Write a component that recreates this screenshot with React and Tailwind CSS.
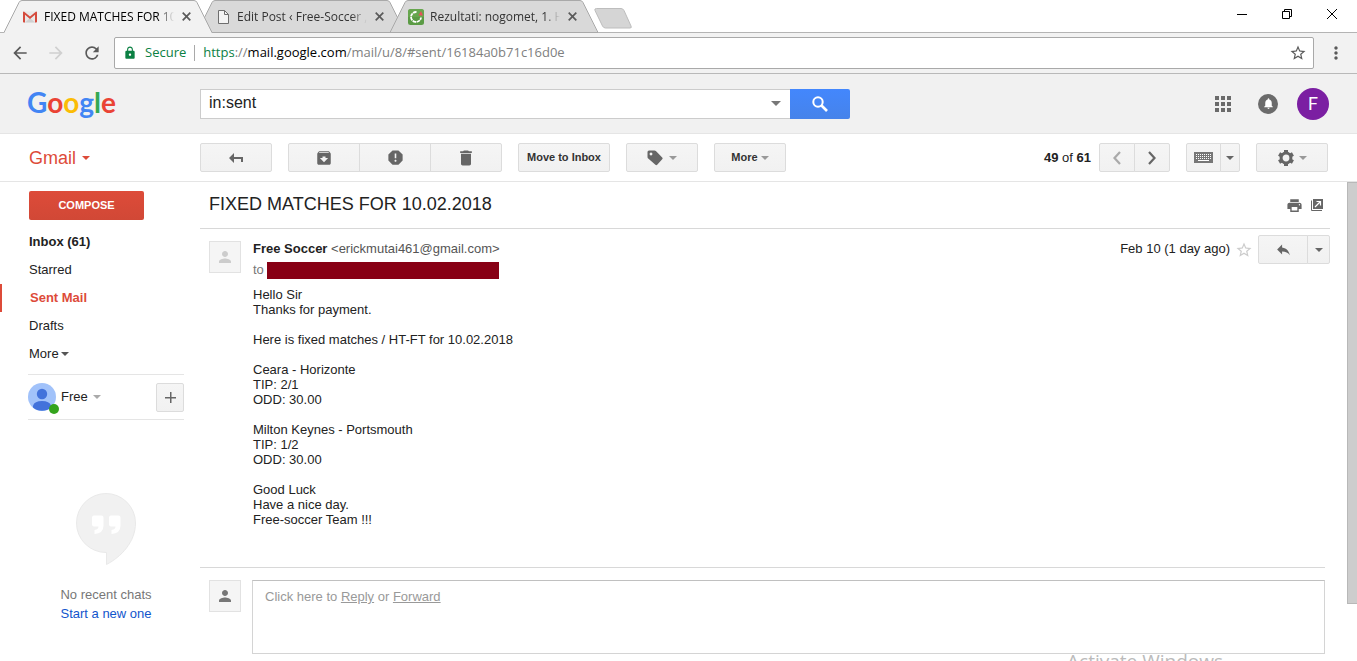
import clsx from 'clsx';
import {
  MdArchive,
  MdArrowBack,
  MdArrowForward,
  MdDelete,
  MdLock,
  MdMoreVert,
  MdNotifications,
  MdPerson,
  MdPrint,
  MdRefresh,
  MdReply,
  MdReport,
  MdSearch,
  MdStarBorder,
} from 'react-icons/md';

const folders = [
  { name: 'Inbox (61)', bold: true },
  { name: 'Starred' },
  { name: 'Sent Mail', active: true },
  { name: 'Drafts' },
];

const message = `Hello Sir
Thanks for payment.

Here is fixed matches / HT-FT for 10.02.2018

Ceara - Horizonte
TIP: 2/1
ODD: 30.00

Milton Keynes - Portsmouth
TIP: 1/2
ODD: 30.00

Good Luck
Have a nice day.
Free-soccer Team !!!`;

function Caret({ className = 'text-[#999]' }) {
  return (
    <svg viewBox="0 0 8 4" className={clsx('w-2 h-1 shrink-0', className)} fill="currentColor">
      <path d="M0 0h8L4 4z" />
    </svg>
  );
}

function Gear() {
  return (
    <svg viewBox="0 0 16 16" className="w-4 h-4 shrink-0" fill="none" stroke="currentColor">
      <circle cx="8" cy="8" r="4.900" strokeWidth="3" />
      {[0, 60, 120].map((angle) => (
        <path key={angle} d="M8 0v3M8 13v3" strokeWidth="4" transform={`rotate(${angle} 8 8)`} />
      ))}
    </svg>
  );
}

function GmailFavicon() {
  return (
    <svg viewBox="0 0 14 12" className="w-[14px] h-3">
      <path d="M1 0.5h12v11H1z" fill="#e9e9e9" />
      <path d="M2 11.5 7 7l5 4.5z" fill="#d0d0d0" />
      <path d="M0 1.2Q0 .5.9.5L7 5.6 13.1.5q.9 0 .9.7v9.6q0 .7-.8.7H12V3.8L7 7.9 2 3.8v7.7H.8q-.8 0-.8-.7z" fill="#d54b3d" />
    </svg>
  );
}

function PageFavicon() {
  return (
    <svg viewBox="0 0 11 14" className="w-[11px] h-[14px]" fill="#f4f4f4" stroke="#6e6e6e">
      <path d="M.5.5h6l4 4v9H.5z" />
      <path d="M6.500.5v4h4" fill="none" />
    </svg>
  );
}

function ScoreFavicon() {
  return (
    <svg viewBox="0 0 16 16" className="w-4 h-4">
      <rect width="16" height="16" rx="2.500" fill="#5b9b45" />
      <path d="M0 2.500A2.500 2.500 0 0 1 2.500 0h11A2.500 2.500 0 0 1 16 2.500V8H0z" fill="#6fae55" opacity=".6" />
      <path d="M8.500 3A5 5 0 1 0 13 8.500" fill="none" stroke="#fff" strokeWidth="1.800" strokeDasharray="3.500 .6" />
      <path d="M10.500 6.500 13 2l2 4.500z" fill="#e8505b" />
    </svg>
  );
}

function Tab({ title, icon, active, className }) {
  return (
    <div className={clsx('relative w-52 h-[33px] flex items-center pl-[18px] pr-5', active ? 'z-10' : 'z-0', className)}>
      <svg viewBox="0 0 208 33" className="absolute inset-0 w-52 h-[33px]">
        <path d="M0 33 15 2.500Q16 .5 18 .5H190q2 0 3 2L208 33z" fill={active ? '#f2f2f2' : '#d9d9d9'} />
        <path
          d={active ? 'M0 32.500 15 2.500Q16 .5 18 .5H190q2 0 3 2L208 32.500' : 'M0 32.500 15 2.500Q16 .5 18 .5H190q2 0 3 2L208 32.500z'}
          fill="none"
          stroke="#a9a9a9"
        />
      </svg>
      <span className="relative w-4 flex justify-center shrink-0">{icon}</span>
      <span
        className={clsx(
          'relative ml-[6px] w-[130px] overflow-hidden whitespace-nowrap text-xs [mask-image:linear-gradient(to_right,black_88%,transparent)]',
          active ? 'text-black' : 'text-[#333]'
        )}
      >
        {title}
      </span>
      <button aria-label="Close tab" className="relative ml-2 shrink-0">
        <svg viewBox="0 0 9 9" className="w-[9px] h-[9px]" stroke="#5a5a5a" strokeWidth="1.700">
          <path d="M.7.7l7.600 7.600M8.300.7.7 8.300" />
        </svg>
      </button>
    </div>
  );
}

function BrowserChrome() {
  return (
    <div className="font-['Open_Sans',sans-serif]">
      <div className="flex justify-between bg-white border-b border-[#b4b4b4] h-[33px]">
        <div className="flex pl-1">
          <Tab active title="FIXED MATCHES FOR 10." icon={<GmailFavicon />} />
          <Tab className="-ml-[15px]" title="Edit Post ‹ Free-Soccer , F" icon={<PageFavicon />} />
          <Tab className="-ml-[15px]" title="Rezultati: nogomet, 1. HN" icon={<ScoreFavicon />} />
          <button aria-label="New tab" className="-ml-1 mt-2 self-start">
            <svg viewBox="0 0 38 21" className="w-[38px] h-[21px]" fill="#d5d5d5" stroke="#bdbdbd">
              <path d="M2.500.5H27q2 0 3 2l7 15.500q1 2-1 2H11.500q-2 0-3-2L1 2.500q-.8-2 1.500-2z" />
            </svg>
          </button>
        </div>
        <div className="flex items-center gap-[35px] pr-5 pb-1">
          <button aria-label="Minimize">
            <svg viewBox="0 0 10 10" className="w-[10px] h-[10px]" stroke="#000"><path d="M0 5.500h10" /></svg>
          </button>
          <button aria-label="Restore">
            <svg viewBox="0 0 10 10" className="w-[10px] h-[10px]" stroke="#000" fill="none">
              <path d="M.5 2.500h7v7h-7zM2.500 2.500v-2h7v7h-2" />
            </svg>
          </button>
          <button aria-label="Close">
            <svg viewBox="0 0 10 10" className="w-[10px] h-[10px]" stroke="#000"><path d="M0 0l10 10M10 0 0 10" /></svg>
          </button>
        </div>
      </div>
      <div className="flex items-center h-[41px] bg-[#f2f2f2] border-b border-[#b9b9b9] pl-[10px] pr-[11px] text-[#5a5a5a]">
        <button aria-label="Back"><MdArrowBack size={20} /></button>
        <button aria-label="Forward" className="ml-4 text-[#d0d0d0]"><MdArrowForward size={20} /></button>
        <button aria-label="Reload" className="ml-4"><MdRefresh size={20} /></button>
        <div className="ml-3 mr-3 flex flex-1 items-center h-8 bg-white border border-[#a9a9a9] rounded-xs pl-2 pr-[6px] text-[13px]">
          <MdLock size={14} className="text-[#0b8043]" />
          <span className="ml-2 text-[#0b8043]">Secure</span>
          <span className="mx-2 w-px h-4 bg-[#a9a9a9]" />
          <div role="textbox" aria-label="Address" className="flex-1 text-[#808080]">
            <span className="text-[#0b8043]">https</span>://<span className="text-black">mail.google.com</span>
            /mail/u/8/#sent/16184a0b71c16d0e
          </div>
          <button aria-label="Bookmark this page"><MdStarBorder size={18} /></button>
        </div>
        <button aria-label="Browser menu"><MdMoreVert size={20} /></button>
      </div>
    </div>
  );
}

function Header() {
  return (
    <header className="flex items-center h-[60px] bg-[#f1f1f1] border-b border-[#e5e5e5] pr-7">
      <a href="#home" className="w-[200px] shrink-0 pl-[27px] pb-1 font-['Lato',sans-serif] font-bold text-[28px] leading-none">
        <span className="text-[#4285f4]">G</span>
        <span className="text-[#ea4335]">o</span>
        <span className="text-[#fbbc05]">o</span>
        <span className="text-[#4285f4]">g</span>
        <span className="text-[#34a853]">l</span>
        <span className="text-[#ea4335]">e</span>
      </a>
      <form className="flex w-[650px] h-[30px]" onSubmit={(e) => e.preventDefault()}>
        <div className="flex flex-1 items-center bg-white border border-r-0 border-[#ccc] pr-[9px]">
          <input aria-label="Search mail" defaultValue="in:sent" className="flex-1 min-w-0 pl-2 pb-0.5 text-base leading-6 text-[#222] outline-none" />
          <button type="button" aria-label="Search options">
            <svg viewBox="0 0 10 5" className="w-[10px] h-[5px]" fill="#777"><path d="M0 0h10L5 5z" /></svg>
          </button>
        </div>
        <button aria-label="Search" className="w-[60px] flex items-center justify-center rounded-r-xs bg-linear-to-b from-[#4387fd] to-[#4683ea] text-white">
          <svg viewBox="0 0 16 16" className="w-4 h-4" fill="none" stroke="currentColor">
            <circle cx="6" cy="6" r="4.700" strokeWidth="2" />
            <path d="M9.500 9.500l5.500 5.500" strokeWidth="2.600" />
          </svg>
        </button>
      </form>
      <div className="ml-auto flex items-center">
        <button aria-label="Google apps">
          <svg viewBox="0 0 16 16" className="w-4 h-4" fill="#6b6b6b">
            {[0, 6, 12].map((y) => [0, 6, 12].map((x) => <rect key={`${x}-${y}`} x={x} y={y} width="4" height="4" />))}
          </svg>
        </button>
        <button aria-label="Notifications" className="ml-[27px] w-5 h-5 rounded-full bg-[#6b6b6b] text-white flex items-center justify-center">
          <MdNotifications size={13} />
        </button>
        <button aria-label="Account" className="ml-[19px] w-8 h-8 rounded-full bg-[#7b1fa2] text-white text-lg leading-none font-['Roboto',sans-serif]">F</button>
      </div>
    </header>
  );
}

const btn = 'h-[29px] flex items-center justify-center border border-[#dcdcdc] bg-linear-to-b from-[#f5f5f5] to-[#f1f1f1] text-[11px] font-bold';

function Btn({ label, color = 'text-[#666]', className, children }) {
  return (
    <button aria-label={label} className={clsx(btn, color, className)}>
      {children}
    </button>
  );
}

function Toolbar() {
  return (
    <div className="flex items-center h-12 border-b border-[#e5e5e5] pr-[29px]">
      <button className="w-[200px] shrink-0 pl-[29px] flex items-center gap-[6px] text-lg leading-6 text-[#dd4b39]">
        Gmail <Caret className="text-[#dd4b39]" />
      </button>
      <div className="flex gap-4">
        <Btn label="Back to Sent Mail" className="w-[72px] rounded-xs">
          <svg viewBox="0 0 14 10" className="w-[14px] h-[10px]" fill="currentColor">
            <path d="M0 5 5 0v4h9v5h-2V6H5v4z" />
          </svg>
        </Btn>
        <div className="flex">
          <Btn label="Archive" className="w-[72px] rounded-l-xs"><MdArchive size={18} /></Btn>
          <Btn label="Report spam" className="w-[72px] -ml-px"><MdReport size={19} /></Btn>
          <Btn label="Delete" className="w-[72px] -ml-px rounded-r-xs"><MdDelete size={20} /></Btn>
        </div>
        <Btn color="text-[#333]" className="w-[92px] rounded-xs whitespace-nowrap">Move to Inbox</Btn>
        <Btn label="Labels" className="w-[72px] rounded-xs gap-[6px]">
          <svg viewBox="0 0 16 16" className="w-4 h-4" fill="currentColor" fillRule="evenodd">
            <path d="M2 0.500h5.500q.8 0 1.400.6l6.300 6.300q.9.9 0 1.800l-5 5.600q-.9.900-1.800 0L1.200 8.500Q.5 8 .5 7V2Q.5.500 2 .5zM4 2.600a1.400 1.400 0 1 0 .01 0z" />
          </svg>
          <Caret />
        </Btn>
        <Btn color="text-[#333]" className="w-[72px] rounded-xs gap-[3px]">More <Caret /></Btn>
      </div>
      <div className="ml-auto flex items-center">
        <span className="mr-2 text-[13px] font-bold text-[#222]">49 <span className="font-normal">of</span> 61</span>
        <Btn label="Newer" color="text-[#aaa]" className="w-9 rounded-l-xs">
          <svg viewBox="0 0 8 14" className="w-2 h-[14px]" fill="none" stroke="currentColor" strokeWidth="2.200"><path d="M7 1 1.500 7 7 13" /></svg>
        </Btn>
        <Btn label="Older" className="w-9 -ml-px rounded-r-xs">
          <svg viewBox="0 0 8 14" className="w-2 h-[14px]" fill="none" stroke="currentColor" strokeWidth="2.200"><path d="M1 1l5.500 6L1 13" /></svg>
        </Btn>
        <Btn label="Input tools" className="ml-4 w-[35px] rounded-l-xs">
          <svg viewBox="0 0 19 11" className="w-[19px] h-[11px]">
            <path d="M0 0h19v11H0z" fill="#777" />
            <path d="M2 2.500h15M2 4.500h15M2 6.500h15" stroke="#fff" strokeDasharray="1 1" />
            <path d="M4 8.500h11" stroke="#fff" />
          </svg>
        </Btn>
        <Btn label="Select input tool" className="w-5 -ml-px rounded-r-xs"><Caret className="text-[#666]" /></Btn>
        <Btn label="Settings" className="ml-4 w-[72px] rounded-xs gap-[5px]"><Gear /><Caret /></Btn>
      </div>
    </div>
  );
}

function Sidebar() {
  return (
    <aside className="w-[200px] shrink-0 pt-[9px] text-[13px] text-[#222]">
      <button className="ml-[29px] w-[115px] h-[29px] rounded-xs bg-linear-to-b from-[#dd4b39] to-[#d14836] text-white text-[11px] font-bold">
        COMPOSE
      </button>
      <nav className="pt-2">
        {folders.map(({ name, bold, active }) => (
          <a
            key={name}
            href="#folder"
            className={clsx(
              'flex items-center h-7',
              active ? 'border-l-2 border-[#dd4b39] pl-7 text-[#dd4b39] font-bold' : 'pl-[29px]',
              bold && 'font-bold'
            )}
          >
            {name}
          </a>
        ))}
        <button className="flex items-center gap-[2px] h-7 pl-[29px]">
          More <Caret className="text-[#555]" />
        </button>
      </nav>
      <div className="mt-[6px] ml-7 mr-4 h-[46px] border-y border-[#e5e5e5] flex items-center">
        <span className="relative">
          <svg viewBox="0 0 28 28" className="w-7 h-7">
            <circle cx="14" cy="14" r="14" fill="#a1c2fa" />
            <circle cx="14" cy="11" r="5.200" fill="#4272db" />
            <path d="M5 24.500v-2Q6.500 18 14 18t9 4.500v2A14 14 0 0 1 5 24.500z" fill="#4272db" />
          </svg>
          <span className="absolute -right-[3px] -bottom-[3px] w-[10px] h-[10px] rounded-full bg-[#34a41d]" />
        </span>
        <button className="ml-[5px] flex items-center gap-[5px]">Free <Caret className="text-[#aaa]" /></button>
        <Btn label="New conversation" className="ml-auto w-7 rounded-xs">
          <svg viewBox="0 0 11 11" className="w-[11px] h-[11px]" fill="currentColor"><path d="M5 0h1.500v5H11v1.500H6.500V11H5V6.500H0V5h5z" /></svg>
        </Btn>
      </div>
      <div className="mt-[73px] pl-3 flex flex-col items-center leading-[19px]">
        <svg viewBox="0 0 60 72" className="w-[60px] h-[72px] mb-5">
          <path d="M30 .5a29.500 29.500 0 0 0 0 59h.5V71.500C45 64 59.500 49 59.500 30A29.500 29.500 0 0 0 30 .5z" fill="#f1f1f1" stroke="#e9e9e9" />
          <path d="M18 22.500h7.500q2 0 2 2v8q0 8-9 8.500V37q4-.5 4-3.500H18q-2 0-2-2v-7q0-2 2-2zM35 22.500h7.500q2 0 2 2v8q0 8-9 8.500V37q4-.5 4-3.500H35q-2 0-2-2v-7q0-2 2-2z" fill="#fff" />
        </svg>
        <span className="text-[#777]">No recent chats</span>
        <a href="#chat" className="text-[#15c]">Start a new one</a>
      </div>
    </aside>
  );
}

function Avatar({ className }) {
  return (
    <span className={clsx('w-8 h-8 shrink-0 flex items-center justify-center bg-[#f5f5f5] border border-[#e2e2e2]', className)}>
      <MdPerson size={18} />
    </span>
  );
}

function Conversation() {
  return (
    <main className="flex-1 min-w-0 pr-[17px] text-[13px] text-[#222]">
      <div className="flex items-center h-[47px] pl-[9px] pr-[7px] border-b border-[#d8d8d8] text-[#666]">
        <h1 className="flex-1 pb-0.5 text-lg leading-6 text-[#222]">FIXED MATCHES FOR 10.02.2018</h1>
        <button aria-label="Print all"><MdPrint size={17} /></button>
        <button aria-label="Open in new window" className="ml-2">
          <svg viewBox="0 0 12 12" className="w-3 h-3">
            <path d="M2 0h10v10H2z" fill="#666" />
            <path d="M.5 1.500v10H11" fill="none" stroke="#666" />
            <path d="M4 8l5-5M5.500 2.500h4v4" fill="none" stroke="#fff" strokeWidth="1.200" />
          </svg>
        </button>
      </div>

      <article className="flex pl-[9px] pt-[6px]">
        <Avatar className="mt-[6px] text-[#ccc]" />
        <div className="flex-1 ml-3">
          <div className="flex items-center h-[29px]">
            <p className="flex-1 pb-0.5 text-[#555]">
              <span className="font-bold text-[#222]">Free Soccer</span> &lt;erickmutai461@gmail.com&gt;
            </p>
            <span className="pb-0.5">Feb 10 (1 day ago)</span>
            <button aria-label="Star" className="mx-[5px] text-[#ccc]"><MdStarBorder size={18} /></button>
            <Btn label="Reply" className="w-[50px] rounded-l-xs"><MdReply size={17} /></Btn>
            <Btn label="More reply options" className="w-[23px] -ml-px rounded-r-xs"><Caret className="text-[#666]" /></Btn>
          </div>
          <p className="flex items-center h-3 text-[#777]">
            to <span className="ml-[3px] w-[232px] h-[17px] bg-[#880015]" />
          </p>
          <p className="mt-[11px] whitespace-pre-line leading-[15px]">{message}</p>
        </div>
      </article>

      <section className="mt-10 mr-[5px] border-t border-[#d8d8d8] pl-[9px] pt-3 flex">
        <Avatar className="text-[#777]" />
        <div className="ml-[11px] flex-1 h-[74px] border border-[#d4d4d4] border-t-[#c0c0c0] px-3 pt-2 leading-4 text-[#999]">
          Click here to <a href="#reply" className="underline">Reply</a> or <a href="#forward" className="underline">Forward</a>
        </div>
      </section>
    </main>
  );
}

export default function App() {
  return (
    <div className="relative h-screen overflow-hidden bg-white flex flex-col font-['Liberation_Sans',sans-serif]">
      <BrowserChrome />
      <Header />
      <Toolbar />
      <div className="flex flex-1 min-h-0">
        <Sidebar />
        <Conversation />
        <div className="w-[10px] shrink-0 h-[422px] bg-[#cdcdcd] border border-r-0 border-[#b8b8b8]" />
      </div>
      {/* system watermark, cut off by the bottom of the window */}
      <span className="absolute right-[134px] -bottom-3 text-[19px] leading-6 text-[#bbb] font-['Open_Sans',sans-serif]">
        Activate Windows
      </span>
    </div>
  );
}
